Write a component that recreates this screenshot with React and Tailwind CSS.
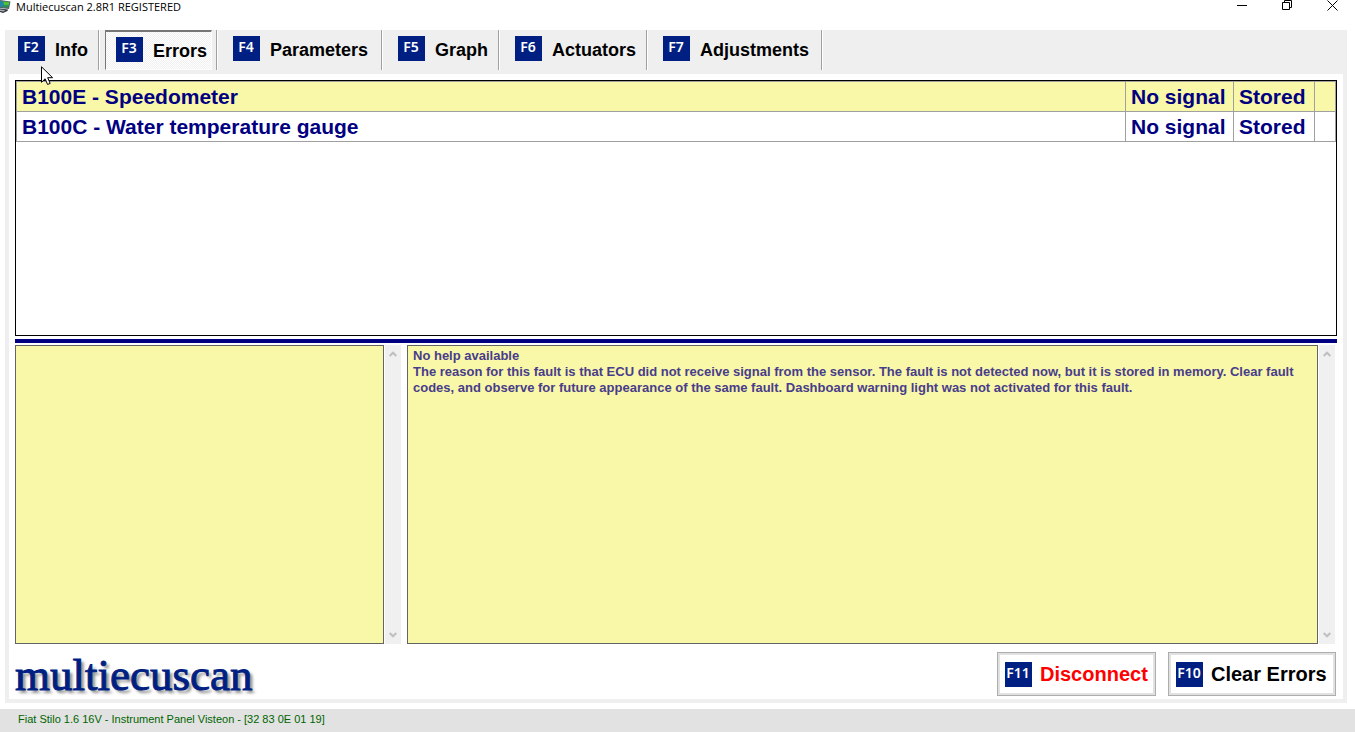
import React from "react";

const tabs = [
  { id: "F2", label: "Info", size: "w-[95px] pl-[13px]" },
  { id: "F3", label: "Errors", size: "w-[118px]", active: true },
  { id: "F4", label: "Parameters", size: "w-[165px] pl-[15px]" },
  { id: "F5", label: "Graph", size: "w-[117px] pl-[15px]" },
  { id: "F6", label: "Actuators", size: "w-[148px] pl-[15px]" },
  { id: "F7", label: "Adjustments", size: "w-[175px] pl-[15px]" },
];

const faults = [
  { name: "B100E - Speedometer", status: "No signal", state: "Stored", selected: true },
  { name: "B100C - Water temperature gauge", status: "No signal", state: "Stored" },
];

const help =
  "No help available\nThe reason for this fault is that ECU did not receive signal from the sensor. The fault is not detected now, but it is stored in memory. Clear fault codes, and observe for future appearance of the same fault. Dashboard warning light was not activated for this fault.";

function KeyBadge({ children }) {
  return (
    <span className="flex h-[25px] w-[27px] shrink-0 justify-center bg-[#001f82] pr-px font-['Noto_Sans',sans-serif] text-[14px] leading-[21px] font-semibold text-white">
      {children}
    </span>
  );
}

function Tab({ id, label, size, active }) {
  return (
    <div className={`flex h-10 shrink-0 border-r border-white ${size}`}>
      <div className="flex flex-1 border-r border-[#a0a0a0]">
        <button
          type="button"
          className={
            active
              ? "ml-[5px] flex h-10 w-[107px] items-center gap-[10px] border border-t-2 border-[#fdfdfd] border-t-[#777] border-l-[#777] bg-[repeating-conic-gradient(#f0f0f0_0_25%,#ffffff_0_50%)] bg-[length:2px_2px] pb-[2px] pl-[10px]"
              : "flex items-center gap-[10px] pb-[3px]"
          }
        >
          <KeyBadge>{id}</KeyBadge>
          <span className="pt-[2px]">{label}</span>
        </button>
      </div>
    </div>
  );
}

function ScrollBar({ name }) {
  return (
    <div className="ml-px flex w-4 shrink-0 flex-col justify-between bg-[#f0f0f0]">
      <button type="button" aria-label={`Scroll ${name} up`} className="flex h-[18px] items-center justify-center">
        <svg width="8" height="6" viewBox="0 0 8 6" fill="none" stroke="#bfbfbf" strokeWidth="2">
          <path d="M0.7 5 L4 1.7 L7.3 5" />
        </svg>
      </button>
      <button type="button" aria-label={`Scroll ${name} down`} className="flex h-[18px] items-center justify-center">
        <svg width="8" height="6" viewBox="0 0 8 6" fill="none" stroke="#bfbfbf" strokeWidth="2">
          <path d="M0.7 1 L4 4.3 L7.3 1" />
        </svg>
      </button>
    </div>
  );
}

function ActionButton({ id, label, className }) {
  return (
    <button type="button" className={`border border-[#adadad] bg-white ${className}`}>
      <span className="flex h-[42px] items-center gap-2 border-2 border-[#e1e1e1] pl-[5px] text-xl">
        <KeyBadge>{id}</KeyBadge>
        <span>{label}</span>
      </span>
    </button>
  );
}

export default function App() {
  return (
    <div className="flex min-h-screen flex-col bg-white font-['Liberation_Sans',Arial,sans-serif] text-black">
      <header className="flex h-[30px] items-start">
        <svg width="11" height="14" viewBox="0 0 11 14" className="shrink-0">
          <path d="M0 0 L10.5 1.5 L9 9 L0 8Z" fill="#55606b" />
          <path d="M0 1 L9.3 2.3 L8.2 7.8 L0 7Z" fill="#2f8f5a" />
          <path d="M3 1.5 L9.3 2.3 L8.8 5 L4 5Z" fill="#4cc43a" />
          <path d="M0 1 L3 1.5 L4 5 L1 7.2 L0 7Z" fill="#2586a5" />
          <path d="M0 8.5 L8 9.5 L7.5 11 L3 13 L0 12Z" fill="#33383f" />
          <path d="M0 9.5 L5 10 L4 11.5 L0 11Z" fill="#a5adb5" />
        </svg>
        <h1 className="ml-[5px] font-['Open_Sans',sans-serif] text-[11px] leading-[14px]">Multiecuscan 2.8R1 REGISTERED</h1>
        <div className="ml-auto flex">
          <button type="button" aria-label="Minimize" className="flex w-[45px] justify-center">
            <svg width="11" height="11" viewBox="0 0 11 11"><path d="M0 5.5H10" stroke="#000" /></svg>
          </button>
          <button type="button" aria-label="Restore" className="flex w-[45px] justify-center">
            <svg width="11" height="11" viewBox="0 0 11 11" fill="none" stroke="#000"><path d="M.5 2.5H7.5V9.5H.5ZM2.5 2.5V.5H9.5V7.5H7.5" /></svg>
          </button>
          <button type="button" aria-label="Close" className="flex w-[45px] justify-center">
            <svg width="11" height="11" viewBox="0 0 11 11"><path d="M.5 .5L10.5 10.5M10.5 .5L.5 10.5" stroke="#000" /></svg>
          </button>
        </div>
      </header>

      <main className="mr-2 mb-[6px] ml-[5px] flex flex-1 flex-col border-4 border-t-0 border-[#efefef]">
        <nav className="-mx-1 flex h-11 bg-[#efefef] text-lg leading-6 font-bold">
          {tabs.map((tab) => (
            <Tab key={tab.id} {...tab} />
          ))}
        </nav>

        <div className="flex flex-1 flex-col px-[6px] pt-[6px]">
          <section className="h-64 border border-black">
            <table className="w-full table-fixed border-collapse text-left text-[21px] leading-7 font-bold text-[#000080]">
              <colgroup>
                <col />
                <col className="w-[108px]" />
                <col className="w-[81px]" />
                <col className="w-[21px]" />
              </colgroup>
              <tbody>
                {faults.map((f) => (
                  <tr key={f.name} className={f.selected ? "bg-[#f9f7a8]" : "bg-white"}>
                    <td className="border border-[#a0a0a0] px-[5px] pt-px pb-0">{f.name}</td>
                    <td className="border border-[#a0a0a0] px-[5px] pt-px pb-0 whitespace-nowrap">{f.status}</td>
                    <td className="border border-[#a0a0a0] px-[5px] pt-px pb-0">{f.state}</td>
                    <td className="border border-[#a0a0a0]" />
                  </tr>
                ))}
              </tbody>
            </table>
          </section>

          <div className="mt-[3px] mb-[2px] h-1 bg-[#000080]" />

          <section className="flex flex-1 gap-[6px]">
            <div className="flex w-[386px] shrink-0">
              <textarea readOnly aria-label="Freeze frame data" className="flex-1 resize-none overflow-hidden border border-[#646464] bg-[#f9f7a8] outline-none" />
              <ScrollBar name="data" />
            </div>
            <div className="flex flex-1 pr-[2px]">
              <textarea
                readOnly
                aria-label="Fault help"
                value={help}
                className="flex-1 resize-none overflow-hidden border border-[#646464] bg-[#f9f7a8] px-[5px] pt-[2px] text-[13px] leading-4 font-bold text-[#483d8b] outline-none"
              />
              <ScrollBar name="help" />
            </div>
          </section>

          <footer className="flex h-[55px] items-start pt-2 pr-px font-bold">
            <div className="text-[45px] leading-[47px] font-normal text-[#001f82] [-webkit-text-stroke:1px_#001f82] [text-shadow:3px_3px_3px_#8a8a8a] font-['Liberation_Serif',serif]">
              multiecuscan
            </div>
            <div className="ml-auto flex gap-3">
              <ActionButton id="F11" label="Disconnect" className="w-[159px] text-[#ff0000]" />
              <ActionButton id="F10" label="Clear Errors" className="w-[168px]" />
            </div>
          </footer>
        </div>
      </main>

      <div className="h-[23px] bg-[#e2e2e2] pl-[18px] text-[11px] leading-5 text-[#006400]">
        Fiat Stilo 1.6 16V - Instrument Panel Visteon - [32 83 0E 01 19]
      </div>

      <svg className="pointer-events-none absolute top-[66px] left-[41px]" width="13" height="20" viewBox="0 0 13 20">
        <path d="M.5 .8V16.3L4.1 12.8L6.6 18.5L9.2 17.4L6.7 11.7H11.6Z" fill="#fff" stroke="#000" />
      </svg>
    </div>
  );
}
